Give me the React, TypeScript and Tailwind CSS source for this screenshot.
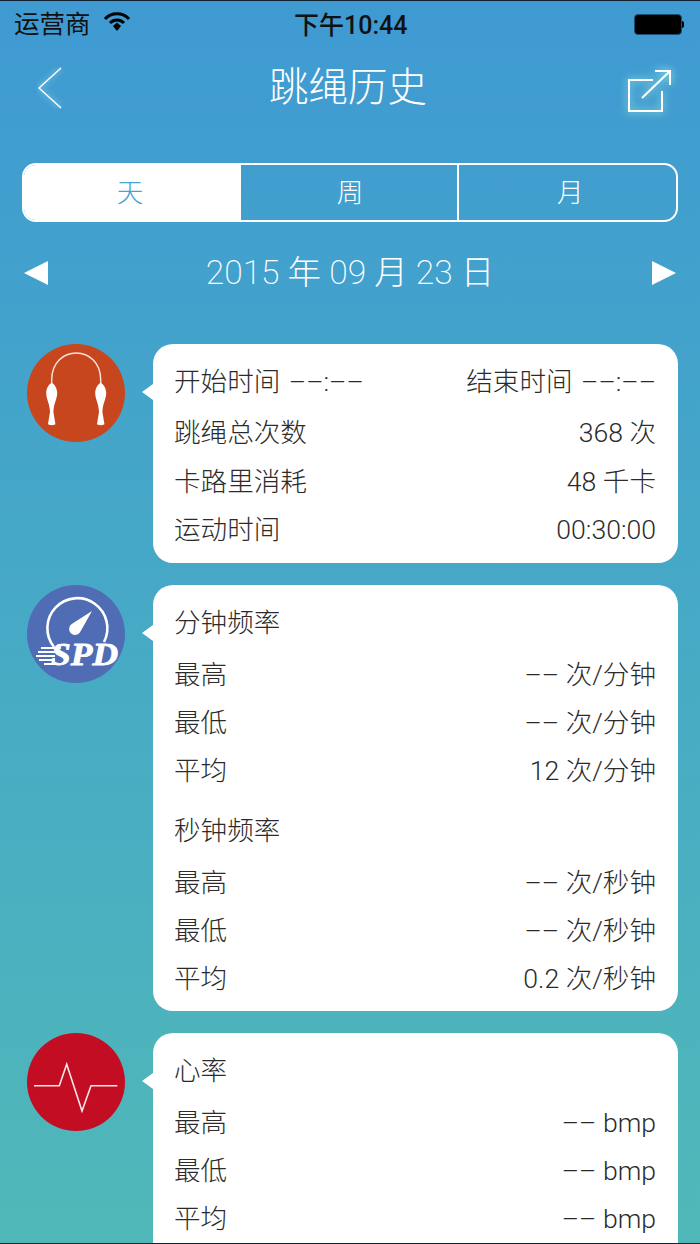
import type { ReactNode } from "react";

const FONT = "font-['Roboto','Noto_Sans_CJK_SC',sans-serif]";

function Row({ label, value, className = "" }: { label: string; value: string; className?: string }) {
  return (
    <div className={`flex items-center justify-between ${className}`}>
      <span>{label}</span>
      <span>{value}</span>
    </div>
  );
}

function Card({ icon, children, className = "" }: { icon: ReactNode; children: ReactNode; className?: string }) {
  return (
    <div className={`flex items-start ${className}`}>
      <div className="ml-[27px] h-[98px] w-[98px] shrink-0">{icon}</div>
      <div className="relative ml-[28px] w-[525px] rounded-[20px] bg-white pl-[21px] pr-[22px] text-[26.6px] font-light leading-[48px] text-[#2b2b2b]">
        <div className="absolute left-[-11px] top-[40px] h-0 w-0 border-y-[8px] border-r-[11px] border-y-transparent border-r-white" />
        {children}
      </div>
    </div>
  );
}

function RopeIcon() {
  return (
    <svg viewBox="0 0 98 98" className="h-full w-full">
      <circle cx="49" cy="49" r="49" fill="#c7461e" />
      <path d="M24.7 42 V36 C24.7 0 73.7 0 73.7 36 V42" fill="none" stroke="#fff" strokeOpacity="0.85" strokeWidth="1.5" />
      <path d="M24.7 39 C21.5 40 19.2 45 19.2 49 C19.2 55 22.6 59 23 68 L21 80 C21 81.5 28.4 81.5 28.4 80 L26.4 68 C26.8 59 30.2 55 30.2 49 C30.2 45 27.9 40 24.7 39Z" fill="#fff" />
      <path d="M73.7 39 C70.5 40 68.2 45 68.2 49 C68.2 55 71.6 59 72 68 L70 80 C70 81.5 77.4 81.5 77.4 80 L75.4 68 C75.8 59 79.2 55 79.2 49 C79.2 45 76.9 40 73.7 39Z" fill="#fff" />
    </svg>
  );
}

function SpeedIcon() {
  return (
    <svg viewBox="0 0 98 98" className="h-full w-full">
      <circle cx="49" cy="49" r="49" fill="#4f6cb4" />
      <path d="M27 62 A30 30 0 1 1 77 57" fill="none" stroke="#fff" strokeWidth="2.6" />
      <path d="M65 26 L53.5 46.5 A6 6 0 1 1 45.5 38.5 Z" fill="#fff" />
      <path d="M14 63 H34 M11 67 H30 M9 71 H28 M12 75 H28 M17 79 H30" stroke="#fff" strokeWidth="1.8" />
      <text x="24" y="80" textLength="67" lengthAdjust="spacingAndGlyphs" fill="#fff" stroke="#fff" strokeWidth="0.8" fontFamily="Liberation Serif" fontWeight="700" fontStyle="italic" fontSize="32">SPD</text>
    </svg>
  );
}

function HeartIcon() {
  return (
    <svg viewBox="0 0 98 98" className="h-full w-full">
      <circle cx="49" cy="49" r="49" fill="#c30d23" />
      <path d="M7 52.7 H32.3 L39.7 31.3 L55 78 L64 52.7 H90.3" fill="none" stroke="#fff" strokeOpacity="0.9" strokeWidth="1.6" />
    </svg>
  );
}

export default function App() {
  return (
    <div className={`h-[1244px] w-[700px] overflow-hidden border-y border-[#123] bg-gradient-to-b from-[#3f9ad2] to-[#50b8b8] ${FONT}`}>
      <div className="relative flex h-[46px] items-center justify-between pl-[14px] pr-[16px] text-[25.5px] text-[#111]">
        <div className="flex items-center gap-[12px]">
          <span>运营商</span>
          <svg viewBox="0 0 28 22" className="mb-[5px] h-[22px] w-[28px]">
            <path d="M2 8 C8 1 20 1 26 8" fill="none" stroke="#000" strokeWidth="3" />
            <path d="M7 12 C11 8 17 8 21 12" fill="none" stroke="#000" strokeWidth="3" />
            <path d="M10 15 L14 11.5 L18 15 L14 20Z" fill="#000" />
          </svg>
        </div>
        <span className="absolute left-[294px] top-[6px] text-[25px] font-medium">下午10:44</span>
        <div className="flex items-center">
          <div className="h-[21px] w-[48px] rounded-[4px] border border-[#1d4f75] bg-black" />
          <div className="h-[7px] w-[2px] rounded-r-full bg-black" />
        </div>
      </div>

      <div className="flex h-[82px] items-center justify-between pl-[37px] pr-[27px] text-white">
        <svg viewBox="0 0 26 42" className="h-[42px] w-[26px]">
          <path d="M24 1 L2 21 L24 41" fill="none" stroke="#fff" strokeWidth="1.4" className="drop-shadow-[0_0_3px_rgba(200,255,240,0.8)]" />
        </svg>
        <span className="ml-[6px] text-[39.5px] font-extralight">跳绳历史</span>
        <svg viewBox="0 0 46 44" className="mt-[5px] h-[44px] w-[46px] overflow-visible">
          <g fill="none" stroke="#fff" strokeWidth="2" className="drop-shadow-[0_0_4px_rgba(190,255,235,1)]">
            <path d="M26 11 H2 V42 H35 V22" />
            <path d="M15 29 L43 2 M28 2 H43 V16" />
          </g>
        </svg>
      </div>

      <div className="mx-[22px] mt-[34px] grid h-[59px] grid-cols-3 overflow-hidden rounded-[14px] border-2 border-white text-[26.6px] font-light text-white">
        <div className="flex items-center justify-center bg-white pr-[5px] text-[#4aa3cf]">天</div>
        <div className="flex items-center justify-center border-r-2 border-white pl-[2px]">周</div>
        <div className="flex items-center justify-center pl-[6px]">月</div>
      </div>

      <div className="mx-[24px] mt-[31px] flex h-[40px] items-center justify-between text-[33.5px] font-extralight text-white">
        <div className="h-0 w-0 border-y-[12px] border-r-[24px] border-y-transparent border-r-white" />
        <span>2015 年 09 月 23 日</span>
        <div className="h-0 w-0 border-y-[12px] border-l-[24px] border-y-transparent border-l-white" />
      </div>

      <Card className="mt-[51px]" icon={<RopeIcon />}>
        <div className="pb-[9px] pt-[14px]">
          <Row label="开始时间 ––:––" value="结束时间 ––:––" className="mb-[3px] [word-spacing:2px]" />
          <Row label="跳绳总次数" value="368 次" />
          <Row label="卡路里消耗" value="48 千卡" className="mt-[1px]" />
          <Row label="运动时间" value="00:30:00" />
        </div>
      </Card>

      <Card className="mt-[22px]" icon={<SpeedIcon />}>
        <div className="pb-[8px] pt-[14px]">
          <div className="mb-[4px]">分钟频率</div>
          <Row label="最高" value="–– 次/分钟" />
          <Row label="最低" value="–– 次/分钟" />
          <Row label="平均" value="12 次/分钟" />
          <div className="mb-[4px] mt-[12px]">秒钟频率</div>
          <Row label="最高" value="–– 次/秒钟" />
          <Row label="最低" value="–– 次/秒钟" />
          <Row label="平均" value="0.2 次/秒钟" />
        </div>
      </Card>

      <Card className="mt-[22px]" icon={<HeartIcon />}>
        <div className="pb-[60px] pt-[14px]">
          <div className="mb-[4px]">心率</div>
          <Row label="最高" value="–– bmp" />
          <Row label="最低" value="–– bmp" />
          <Row label="平均" value="–– bmp" />
        </div>
      </Card>
    </div>
  );
}
